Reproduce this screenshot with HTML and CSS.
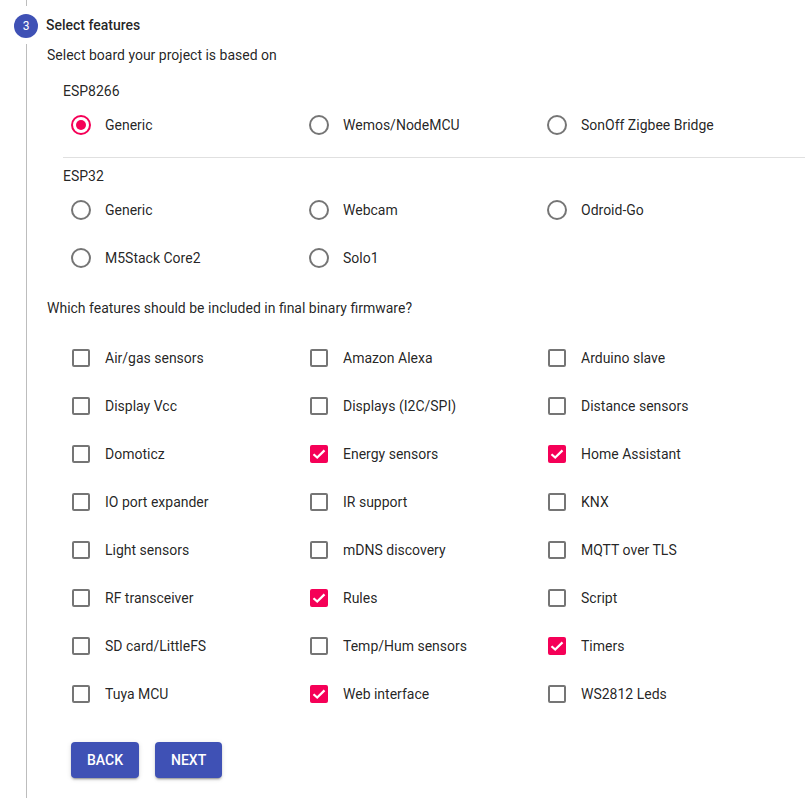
FILE: index.html
```html
<!DOCTYPE html>
<html>
<head>
<meta charset="utf-8">
<link rel="stylesheet" href="styles.css">
</head>
<body>
<div class="stepper">
  <div class="connector-top"></div>
  <div class="step-header">
    <div class="step-icon">3</div>
    <div class="step-title">Select features</div>
  </div>
  <div class="step-content">
    <p class="intro">Select board your project is based on</p>

    <div class="board-group">
      <div class="group-label">ESP8266</div>
      <div class="grid">
        <label class="option"><span class="radio checked"></span><span class="text">Generic</span></label>
        <label class="option"><span class="radio"></span><span class="text">Wemos/NodeMCU</span></label>
        <label class="option"><span class="radio"></span><span class="text">SonOff Zigbee Bridge</span></label>
      </div>
      <div class="divider"></div>
      <div class="group-label second">ESP32</div>
      <div class="grid">
        <label class="option"><span class="radio"></span><span class="text">Generic</span></label>
        <label class="option"><span class="radio"></span><span class="text">Webcam</span></label>
        <label class="option"><span class="radio"></span><span class="text">Odroid-Go</span></label>
        <label class="option"><span class="radio"></span><span class="text">M5Stack Core2</span></label>
        <label class="option"><span class="radio"></span><span class="text">Solo1</span></label>
      </div>
    </div>

    <p class="question">Which features should be included in final binary firmware?</p>

    <div class="grid features">
      <label class="option"><span class="check"></span><span class="text">Air/gas sensors</span></label>
      <label class="option"><span class="check"></span><span class="text">Amazon Alexa</span></label>
      <label class="option"><span class="check"></span><span class="text">Arduino slave</span></label>
      <label class="option"><span class="check"></span><span class="text">Display Vcc</span></label>
      <label class="option"><span class="check"></span><span class="text">Displays (I2C/SPI)</span></label>
      <label class="option"><span class="check"></span><span class="text">Distance sensors</span></label>
      <label class="option"><span class="check"></span><span class="text">Domoticz</span></label>
      <label class="option"><span class="check checked"><svg viewBox="0 0 18 18"><path d="M3.5 9.2 L7.2 12.6 L14.5 5.4"/></svg></span><span class="text">Energy sensors</span></label>
      <label class="option"><span class="check checked"><svg viewBox="0 0 18 18"><path d="M3.5 9.2 L7.2 12.6 L14.5 5.4"/></svg></span><span class="text">Home Assistant</span></label>
      <label class="option"><span class="check"></span><span class="text">IO port expander</span></label>
      <label class="option"><span class="check"></span><span class="text">IR support</span></label>
      <label class="option"><span class="check"></span><span class="text">KNX</span></label>
      <label class="option"><span class="check"></span><span class="text">Light sensors</span></label>
      <label class="option"><span class="check"></span><span class="text">mDNS discovery</span></label>
      <label class="option"><span class="check"></span><span class="text">MQTT over TLS</span></label>
      <label class="option"><span class="check"></span><span class="text">RF transceiver</span></label>
      <label class="option"><span class="check checked"><svg viewBox="0 0 18 18"><path d="M3.5 9.2 L7.2 12.6 L14.5 5.4"/></svg></span><span class="text">Rules</span></label>
      <label class="option"><span class="check"></span><span class="text">Script</span></label>
      <label class="option"><span class="check"></span><span class="text">SD card/LittleFS</span></label>
      <label class="option"><span class="check"></span><span class="text">Temp/Hum sensors</span></label>
      <label class="option"><span class="check checked"><svg viewBox="0 0 18 18"><path d="M3.5 9.2 L7.2 12.6 L14.5 5.4"/></svg></span><span class="text">Timers</span></label>
      <label class="option"><span class="check"></span><span class="text">Tuya MCU</span></label>
      <label class="option"><span class="check checked"><svg viewBox="0 0 18 18"><path d="M3.5 9.2 L7.2 12.6 L14.5 5.4"/></svg></span><span class="text">Web interface</span></label>
      <label class="option"><span class="check"></span><span class="text">WS2812 Leds</span></label>
    </div>

    <div class="actions">
      <button class="btn">BACK</button>
      <button class="btn">NEXT</button>
    </div>
  </div>
</div>
</body>
</html>
```

FILE: styles.css
```css
html, body {
  margin: 0;
  padding: 0;
  background: #fff;
}
body {
  font-family: Roboto, "Liberation Sans", sans-serif;
  font-size: 14px;
  color: rgba(0, 0, 0, 0.87);
  width: 805px;
  height: 798px;
  overflow: hidden;
}
.stepper {
  display: flex;
  flex-direction: column;
}
.connector-top {
  margin-left: 26px;
  width: 1px;
  height: 6px;
  background: #bdbdbd;
}
.step-header {
  display: flex;
  align-items: center;
  gap: 8px;
  padding: 8px 0 0 14px;
  height: 24px;
}
.step-icon {
  width: 24px;
  height: 24px;
  border-radius: 50%;
  background: #3f51b5;
  color: #fff;
  font-size: 12px;
  line-height: 24px;
  text-align: center;
}
.step-title {
  font-weight: 500;
  font-size: 14px;
  line-height: 20px;
  margin-top: -2px;
}
.step-content {
  margin-left: 26px;
  margin-top: 6px;
  border-left: 1px solid #bdbdbd;
  padding: 1px 0 40px 20px;
}
.intro, .question {
  margin: 0;
  line-height: 20px;
}
.board-group {
  padding-left: 16px;
  margin-top: 16px;
}
.group-label {
  line-height: 20px;
}
.group-label.second {
  margin-top: 8px;
}
.divider {
  height: 1px;
  background: #e0e0e0;
  margin-top: 8px;
}
.grid {
  display: grid;
  grid-template-columns: 238px 238px 238px;
  padding-left: 8px;
}
.question {
  margin-top: 16px;
}
.features {
  padding-left: 24px;
  margin-top: 16px;
}
.option {
  display: flex;
  align-items: center;
  height: 48px;
  gap: 14px;
  line-height: 20px;
}
.radio {
  box-sizing: border-box;
  width: 20px;
  height: 20px;
  border-radius: 50%;
  border: 2px solid rgba(0, 0, 0, 0.54);
  display: flex;
  align-items: center;
  justify-content: center;
  flex: none;
}
.radio.checked {
  border-color: #f50057;
}
.radio.checked::after {
  content: "";
  width: 10px;
  height: 10px;
  border-radius: 50%;
  background: #f50057;
}
.check {
  box-sizing: border-box;
  width: 18px;
  height: 18px;
  margin: 0 1px;
  border-radius: 2px;
  border: 2px solid rgba(0, 0, 0, 0.54);
  flex: none;
  display: flex;
}
.check.checked {
  border: none;
  background: #f50057;
}
.check svg {
  width: 18px;
  height: 18px;
}
.check svg path {
  fill: none;
  stroke: #fff;
  stroke-width: 2.2;
}
.actions {
  display: flex;
  gap: 16px;
  padding-left: 24px;
  margin-top: 24px;
}
.btn {
  font-family: Roboto, "Liberation Sans", sans-serif;
  font-size: 14px;
  font-weight: 500;
  height: 36px;
  line-height: 36px;
  padding: 0 16px;
  min-width: 64px;
  border: none;
  border-radius: 4px;
  background: #3f51b5;
  color: #fff;
  box-shadow: 0 3px 1px -2px rgba(0,0,0,.2), 0 2px 2px 0 rgba(0,0,0,.14), 0 1px 5px 0 rgba(0,0,0,.12);
}
```
